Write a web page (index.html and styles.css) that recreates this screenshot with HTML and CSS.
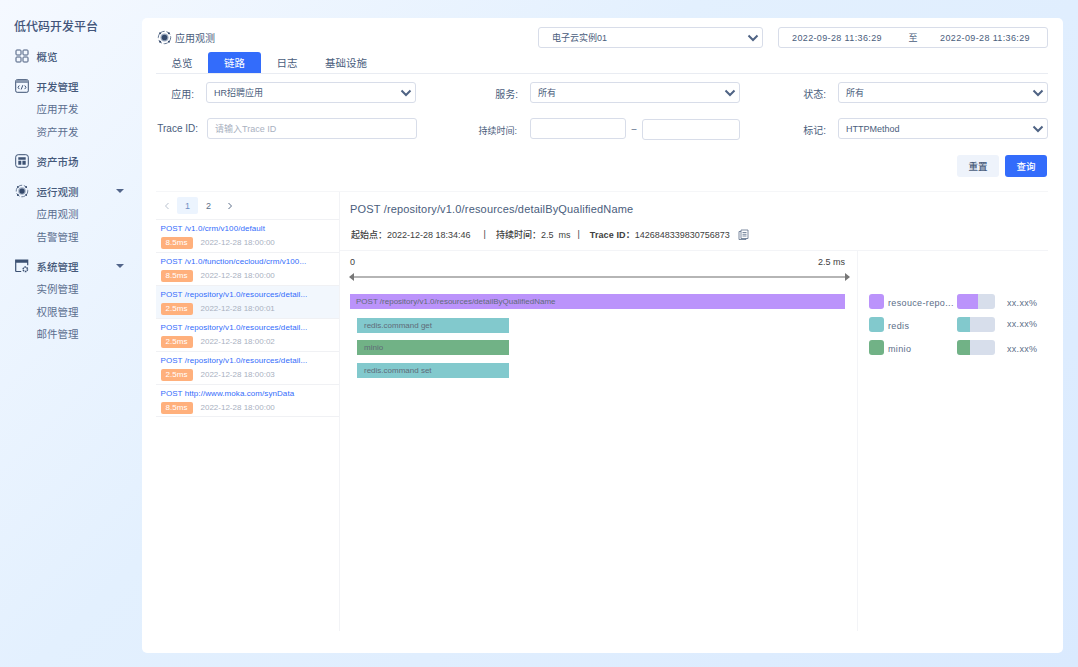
FILE: index.html
```html
<!DOCTYPE html>
<html lang="zh">
<head>
<meta charset="utf-8">
<title>低代码开发平台</title>
<link rel="stylesheet" href="styles.css">
</head>
<body>
<svg class="defs" width="0" height="0" aria-hidden="true">
  <symbol id="chev" viewBox="0 0 12 8"><path d="M1.500 1.500 6 6l4.500-4.500" fill="none" stroke="#4f6384" stroke-width="2"/></symbol>
  <symbol id="orbit" viewBox="0 0 16 16">
    <circle cx="8" cy="8" r="4.300" fill="#9fadc2"/>
    <circle cx="8" cy="8" r="3" fill="#34496b"/>
    <circle cx="8" cy="8" r="6.600" fill="none" stroke="#5a6d8b" stroke-width="1" stroke-dasharray="4.500 2"/>
    <circle cx="3.300" cy="3.500" r="1.100" fill="#34496b"/><circle cx="12.700" cy="3.500" r="1.100" fill="#34496b"/>
    <circle cx="3.300" cy="12.500" r="1.100" fill="#34496b"/><circle cx="12.700" cy="12.500" r="1.100" fill="#34496b"/>
  </symbol>
</svg>
<div class="app">
  <aside class="side">
    <h1 class="brand">低代码开发平台</h1>
    <nav class="nav">
      <div class="group">
        <div class="head"><svg class="ico" viewBox="0 0 14 14"><g fill="none" stroke="#45597a" stroke-width="1"><rect x="1" y="1" width="5" height="5" rx=".8"/><rect x="8" y="1" width="5" height="5" rx=".8"/><rect x="1" y="8" width="5" height="5" rx=".8"/><rect x="8" y="8" width="5" height="5" rx=".8"/></g></svg><span>概览</span></div>
      </div>
      <div class="group">
        <div class="head"><svg class="ico" viewBox="0 0 14 14"><g fill="none" stroke="#3d5273" stroke-width="1"><rect x=".7" y=".7" width="12.600" height="12.600" rx="1.500"/><path d="M4.300 6.500 3 8.300l1.300 1.800M9.700 6.500 11 8.300l-1.300 1.800M7.800 6.200 6.200 10.500"/></g><path d="M1 1h12v3H1z" fill="#8897ae"/></svg><span>开发管理</span></div>
        <div class="sub">应用开发</div>
        <div class="sub">资产开发</div>
      </div>
      <div class="group">
        <div class="head"><svg class="ico" viewBox="0 0 14 14"><rect x=".7" y=".7" width="12.600" height="12.600" rx="2.500" fill="none" stroke="#3d5273" stroke-width="1"/><path d="M3.300 3.300h7.400v2.400H3.300zM3.300 6.800h3v3.900h-3zM7.400 6.800h3.300v3.900H7.400z" fill="#3d5273"/></svg><span>资产市场</span></div>
      </div>
      <div class="group">
        <div class="head"><svg class="ico"><use href="#orbit"/></svg><span>运行观测</span><i class="caret"></i></div>
        <div class="sub">应用观测</div>
        <div class="sub">告警管理</div>
      </div>
      <div class="group">
        <div class="head"><svg class="ico" viewBox="0 0 14 14"><path d="M.7 12.500V1.200h12v5" fill="none" stroke="#3d5273" stroke-width="1.200"/><path d="M.7 1h12.300v2.800H.7zM.7 12h5.500v1H.7z" fill="#3d5273"/><circle cx="10.300" cy="10.300" r="2.200" fill="none" stroke="#3d5273" stroke-width="1.500" stroke-dasharray="1.500 .6"/></svg><span>系统管理</span><i class="caret"></i></div>
        <div class="sub">实例管理</div>
        <div class="sub">权限管理</div>
        <div class="sub">邮件管理</div>
      </div>
    </nav>
  </aside>

  <main class="card">
    <header class="top">
      <div class="page-title"><svg class="ico"><use href="#orbit"/></svg><span>应用观测</span></div>
      <div class="ctl inst"><span>电子云实例01</span><svg class="chev"><use href="#chev"/></svg></div>
      <div class="ctl range"><span class="dt">2022-09-28 11:36:29</span><span class="to">至</span><span class="dt">2022-09-28 11:36:29</span></div>
    </header>
    <div class="tabs">
      <a class="tab t1">总览</a>
      <a class="tab on">链路</a>
      <a class="tab t3">日志</a>
      <a class="tab t4">基础设施</a>
    </div>
    <section class="filters">
      <label class="field"><span class="lab">应用:</span><div class="ctl w210"><span>HR招聘应用</span><svg class="chev"><use href="#chev"/></svg></div></label>
      <label class="field"><span class="lab">服务:</span><div class="ctl w210"><span>所有</span><svg class="chev"><use href="#chev"/></svg></div></label>
      <label class="field"><span class="lab">状态:</span><div class="ctl w210"><span>所有</span><svg class="chev"><use href="#chev"/></svg></div></label>
      <label class="field"><span class="lab lab-id">Trace ID:</span><div class="ctl w210 ph"><span>请输入Trace ID</span></div></label>
      <div class="field"><span class="lab low">持续时间:</span><div class="ctl w96"></div><span class="dash">–</span><div class="ctl w98"></div></div>
      <label class="field"><span class="lab">标记:</span><div class="ctl w210"><span>HTTPMethod</span><svg class="chev"><use href="#chev"/></svg></div></label>
    </section>
    <div class="actions"><button class="btn">重置</button><button class="btn pri">查询</button></div>

    <section class="split">
      <div class="list">
        <div class="pager"><span class="pg"><svg width="6" height="8" viewBox="0 0 6 8"><path d="M4.500 1 1.500 4l3 3" fill="none" stroke="#b9c2cf"/></svg></span><span class="pg cur">1</span><span class="pg">2</span><span class="pg"><svg width="6" height="8" viewBox="0 0 6 8"><path d="M1.500 1l3 3-3 3" fill="none" stroke="#5b6d88"/></svg></span></div>
        <div class="item"><div class="url">POST /v1.0/crm/v100/default</div><div class="meta"><span class="tag">8.5ms</span><span class="time">2022-12-28 18:00:00</span></div></div>
        <div class="item"><div class="url">POST /v1.0/function/cecloud/crm/v100...</div><div class="meta"><span class="tag">8.5ms</span><span class="time">2022-12-28 18:00:00</span></div></div>
        <div class="item sel"><div class="url">POST /repository/v1.0/resources/detail...</div><div class="meta"><span class="tag">2.5ms</span><span class="time">2022-12-28 18:00:01</span></div></div>
        <div class="item"><div class="url">POST /repository/v1.0/resources/detail...</div><div class="meta"><span class="tag">2.5ms</span><span class="time">2022-12-28 18:00:02</span></div></div>
        <div class="item"><div class="url">POST /repository/v1.0/resources/detail...</div><div class="meta"><span class="tag">2.5ms</span><span class="time">2022-12-28 18:00:03</span></div></div>
        <div class="item"><div class="url">POST http://www.moka.com/synData</div><div class="meta"><span class="tag">8.5ms</span><span class="time">2022-12-28 18:00:00</span></div></div>
      </div>
      <div class="detail">
        <div class="d-head">
          <h2 class="d-title">POST /repository/v1.0/resources/detailByQualifiedName</h2>
          <div class="d-meta">
            <span><b>起始点：</b>2022-12-28 18:34:46</span><span class="sep">|</span>
            <span><b>持续时间：</b>2.5&nbsp; ms</span><span class="sep s2">|</span>
            <span><b class="strong">Trace ID：</b>1426848339830756873</span>
            <svg class="copy" viewBox="0 0 11 11"><g fill="none" stroke="#5b6d88" stroke-width=".8"><path d="M3 1h7v8.500H3zM3 2.500H1v8h7V9.500"/><path d="M4.500 3.500h4M4.500 5.300h4M4.500 7h4"/></g></svg>
          </div>
        </div>
        <div class="d-body">
          <div class="timeline">
            <div class="scale"><span>0</span><span>2.5 ms</span></div>
            <div class="axis"><i class="ah l"></i><i class="ah r"></i></div>
            <div class="bar purple main">POST /repository/v1.0/resources/detailByQualifiedName</div>
            <div class="bar teal child g1">redis.command get</div>
            <div class="bar green child g2">minio</div>
            <div class="bar teal child g3">redis.command set</div>
          </div>
          <div class="legend">
            <div class="lg"><i class="sw purple"></i><span class="lg-name">resouce-repo...</span><span class="meter"><i class="purple" style="width:55%"></i></span><span class="pct">xx.xx%</span></div>
            <div class="lg"><i class="sw teal"></i><span class="lg-name">redis</span><span class="meter"><i class="teal" style="width:34%"></i></span><span class="pct">xx.xx%</span></div>
            <div class="lg"><i class="sw green"></i><span class="lg-name">minio</span><span class="meter"><i class="green" style="width:34%"></i></span><span class="pct">xx.xx%</span></div>
          </div>
        </div>
      </div>
    </section>
  </main>
</div>
</body>
</html>
```
FILE: styles.css
```css
* { box-sizing: border-box; }
html, body { margin: 0; height: 100%; }
body {
  width: 1078px; height: 667px; overflow: hidden;
  background: linear-gradient(135deg, #f5f9ff 0%, #e3f0fe 40%, #e0eefe 62%, #daeafe 100%);
  font-family: "Liberation Sans", "Noto Sans CJK SC", sans-serif;
  color: #4a5d7c; font-size: 9px;
}
.defs { position: absolute; }
.app { display: flex; height: 667px; padding: 18px 15px 14px 0; }

.side { width: 142px; flex: none; padding: 0 0 0 14px; }
.brand { margin: 0; font-size: 12px; line-height: 18px; font-weight: 500; color: #42557a; }
.nav { margin-top: 9px; }
.group { margin-bottom: 7.5px; }
.head, .sub { height: 22.5px; display: flex; align-items: center; font-size: 10.5px; }
.head { color: #45597a; font-weight: 500; width: 110px; }
.head .ico { width: 14px; height: 14px; margin: 0 7.500px 0 1px; flex: none; }
.sub { padding-left: 22.500px; color: #5a6d8e; font-weight: 400; }
.caret { margin-left: auto; border: 4px solid transparent; border-top: 4.500px solid #52658a; border-bottom: 0; }

.card {
  flex: 1; background: #fff; border-radius: 5px;
  padding: 9px 15px 22px 14px; display: flex; flex-direction: column; min-width: 0;
}
.top { display: flex; align-items: center; height: 21px; }
.page-title { display: flex; align-items: center; width: 382px; font-size: 10px; color: #4a5d7c; }
.page-title .ico { width: 15px; height: 15px; margin: 0 3px 0 1px; }
.ctl {
  height: 21px; border: 1px solid #d8dde9; border-radius: 3px; display: flex;
  align-items: center; justify-content: space-between; padding: 0 3px 0 7px;
  font-size: 9px; color: #4a5d7c; background: #fff; flex: none;
}
.chev { width: 12px; height: 8px; flex: none; }
.inst { width: 225px; padding-left: 13px; margin-right: 15px; }
.range { width: 270px; padding: 0 17px 0 13px; }
.dt { letter-spacing: .37px; }
.to { margin-left: 4px; }
.tabs { display: flex; height: 22px; margin-top: 4px; border-bottom: 1px solid #e9ecf2; font-size: 10.5px; }
.tab { display: flex; align-items: center; justify-content: center; color: #4a5d7c; height: 21px; padding-bottom: 1px; }
.t1 { width: 52px; }
.on { width: 53px; padding-bottom: 0; background: #336cfb; color: #fff; border-radius: 3px 3px 0 0; }
.t3 { width: 52px; }
.t4 { margin-left: 12px; }

.filters { display: grid; grid-template-columns: 260px 324px 308px; row-gap: 15px; margin-top: 8px; }
.field { display: flex; align-items: center; justify-content: flex-end; height: 21px; }
.lab { margin-right: 12px; font-size: 10px; padding-top: 1px; white-space: nowrap; }
.lab-id { margin-right: 9px; padding-top: 0; }
.low { font-size: 9px; padding-top: 3px; margin-right: 13px; }
.w210 { width: 210px; }
.ph { color: #a9b1bf; margin-right: -1px; }
.w96 { width: 96px; }
.w98 { width: 98px; margin-top: 1px; }
.dash { width: 16px; text-align: center; }
.actions { display: flex; justify-content: flex-end; gap: 6px; margin-top: 16px; padding-right: 1px; }
.btn {
  width: 42px; height: 22px; border: 0; border-radius: 3px; background: #eef3fb; color: #4a5d7c;
  font: 500 9.500px "Liberation Sans", "Noto Sans CJK SC", sans-serif; padding: 0;
}
.pri { background: #336cfb; color: #fff; }

.split { flex: 1; display: flex; margin-top: 14px; border-top: 1px solid #f5f6f8; min-height: 0; }
.list { width: 184px; flex: none; border-right: 1px solid #f2f3f6; }
.pager { display: flex; align-items: center; height: 17px; margin: 5px 0; font-size: 9px; }
.pg { width: 21px; height: 17px; display: flex; align-items: center; justify-content: center; border-radius: 2px; color: #5b6d88; }
.cur { background: #ecf4fe; color: #6f8fc4; }
.item { height: 33px; border-top: 1px solid #f0f1f4; padding: 3px 0 0 4.500px; }
.item:last-child { border-bottom: 1px solid #f0f1f4; }
.sel { background: #f2f7fd; }
.url { font-size: 8px; line-height: 11px; letter-spacing: .07px; color: #336cfb; white-space: nowrap; }
.meta { display: flex; align-items: center; margin-top: 3px; }
.tag { width: 32px; height: 12px; background: #ffb07c; color: #fff; border-radius: 2px; text-align: center; line-height: 11px; font-size: 8px; }
.time { margin-left: 8px; margin-bottom: 2px; color: #a9b1bf; font-size: 8px; }

.detail { flex: 1; min-width: 0; display: flex; flex-direction: column; }
.d-head { height: 59px; border-bottom: 1px solid #f3f4f7; padding: 10px 0 0 10px; }
.d-title { margin: 0; font-size: 11px; line-height: 14px; letter-spacing: .17px; font-weight: 400; color: #4a5d7c; }
.d-meta { display: flex; align-items: center; margin-top: 12px; padding-left: 1px; height: 12px; font-size: 9px; color: #404040; }
.d-meta b { font-weight: 500; }
.d-meta b.strong { font-weight: 700; letter-spacing: .1px; }
.sep { margin: 0 10px 0 13px; }
.s2 { margin: 0 10px 0 7px; }
.copy { width: 11px; height: 11px; margin-left: 8px; }
.d-body { flex: 1; display: flex; min-height: 0; }
.timeline { width: 518px; flex: none; border-right: 1px solid #f3f4f7; padding: 6px 8px 0 10px; }
.scale { display: flex; justify-content: space-between; padding-right: 4px; line-height: 11px; font-size: 9px; color: #404040; }
.axis { height: 2px; width: 499px; background: #b5b5b5; margin-top: 8px; position: relative; }
.ah { position: absolute; top: -3px; border: 4px solid transparent; }
.ah.l { left: -1px; border-left: 0; border-right: 5px solid #777; }
.ah.r { right: -1px; border-right: 0; border-left: 5px solid #777; }
.bar { height: 15px; line-height: 15px; font-size: 8px; color: #5f6b78; white-space: nowrap; }
.purple { background: #bb93fb; }
.teal { background: #82c9cd; }
.green { background: #71b286; }
.main { margin-top: 16px; width: 495px; padding-left: 6px; }
.child { margin-left: 7px; width: 152px; padding-left: 7px; }
.g1 { margin-top: 9px; }
.g2 { margin-top: 7px; }
.g3 { margin-top: 8px; }
.legend { flex: 1; padding: 43px 0 0 11px; }
.lg { display: flex; align-items: center; height: 15px; margin-bottom: 8px; font-size: 9px; }
.sw { width: 15px; height: 15px; border-radius: 3px; flex: none; }
.lg-name { width: 73px; padding: 3px 0 0 4px; white-space: nowrap; letter-spacing: .35px; color: #5b6d88; }
.meter { width: 38px; height: 15px; background: #d7deeb; border-radius: 3px; overflow: hidden; flex: none; }
.meter i { display: block; height: 100%; }
.pct { margin-left: 12px; padding-top: 3px; letter-spacing: .3px; color: #5b6d88; }
.lg:nth-child(2) .pct { padding: 0 0 2px; }
```
